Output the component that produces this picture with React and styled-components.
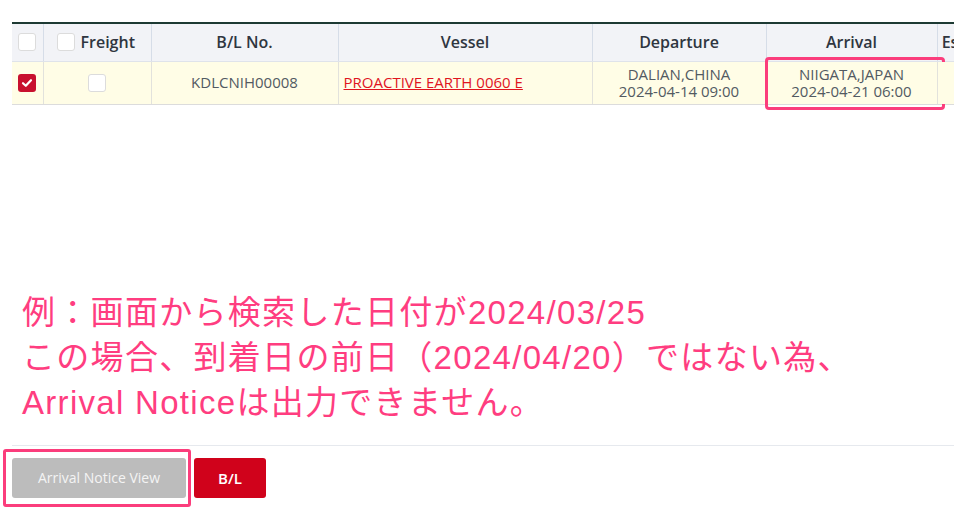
import React from "react";
import styled, { createGlobalStyle } from "styled-components";

const Global = createGlobalStyle`
  html, body { margin: 0; padding: 0; background: #fff; }
  body { font-family: "Open Sans", "Noto Sans", sans-serif; overflow: hidden; }
`;

const Page = styled.div`
  width: 954px;
  height: 515px;
  overflow: hidden;
  padding: 22px 0 0 12px;
  box-sizing: border-box;
  display: flex;
  flex-direction: column;
`;

const TableWrap = styled.div`
  width: 942px;
`;

const Table = styled.table`
  border-collapse: collapse;
  table-layout: fixed;
  width: 1000px;
  border-top: 2px solid #1d3a33;
`;

const Th = styled.th`
  background: #f2f3f7;
  height: 38px;
  padding: 0 0 1px 0;
  box-sizing: border-box;
  font-size: 16px;
  line-height: 20px;
  font-weight: 600;
  color: #2f3640;
  text-align: ${(p) => p.align || "center"};
  border-right: 1px solid #d6dde8;
  border-bottom: 1px solid #dfe3ea;
  white-space: nowrap;
  overflow: hidden;
`;

const Td = styled.td`
  background: #fffde6;
  height: 42px;
  padding: 0;
  font-size: 15px;
  line-height: 17px;
  color: #525a62;
  text-align: center;
  vertical-align: middle;
  border-right: 1px solid #e2e2dc;
  border-bottom: 1px solid #dcdcdc;
  position: relative;
`;

const CellInner = styled.div`
  display: flex;
  align-items: center;
  justify-content: ${(p) => p.justify || "center"};
  gap: 6px;
  padding-left: ${(p) => p.pl || 0}px;
`;

const Box = styled.span`
  display: inline-block;
  width: 18px;
  height: 18px;
  box-sizing: border-box;
  border: 1px solid #dcdcdc;
  border-radius: 3px;
  background: #fff;
  vertical-align: middle;
  margin-top: ${(p) => p.mt || 0}px;
`;

const CheckedBox = styled.span`
  display: inline-flex;
  align-items: center;
  justify-content: center;
  width: 18px;
  height: 18px;
  border-radius: 3px;
  background: #c8102e;
  vertical-align: middle;
`;

const VesselLink = styled.a`
  color: #e0141e;
  text-decoration: underline;
  font-size: 15px;
  display: block;
  text-align: left;
  padding-left: 5px;
`;

const Callout = styled.span`
  position: absolute;
  left: -2px;
  right: -8px;
  top: -5px;
  bottom: -6px;
  border: 3px solid #fb3d7c;
  border-radius: 4px;
  pointer-events: none;
`;

const Note = styled.div`
  margin-top: 185px;
  padding-left: 10px;
  font-family: "Liberation Sans", "Noto Sans CJK JP", sans-serif;
  font-size: 33px;
  line-height: 45px;
  letter-spacing: 1.3px;
  color: #ff3d80;
  white-space: nowrap;
`;

const Divider = styled.hr`
  border: 0;
  border-top: 1px solid #e6e9ee;
  margin: 20px 0 0 0;
  width: 942px;
`;

const ButtonRow = styled.div`
  display: flex;
  gap: 8px;
  padding-top: 12px;
`;

const ButtonHolder = styled.span`
  position: relative;
  display: inline-flex;
`;

const Button = styled.button`
  height: 40px;
  width: ${(p) => p.w}px;
  border: 0;
  border-radius: 3px;
  background: ${(p) => (p.variant === "disabled" ? "#bcbcbc" : "#d0021b")};
  color: ${(p) => (p.variant === "disabled" ? "#f4f4f4" : "#fff")};
  font-family: "Open Sans", sans-serif;
  font-size: ${(p) => (p.variant === "disabled" ? 14 : 15)}px;
  font-weight: ${(p) => (p.variant === "disabled" ? 400 : 600)};
  padding: 0;
`;

const ButtonCallout = styled.span`
  position: absolute;
  left: -9px;
  right: -5px;
  top: -9px;
  bottom: -9px;
  border: 3px solid #fb3d7c;
  border-radius: 3px;
  pointer-events: none;
`;

const Check = () => (
  <svg width="12" height="10" viewBox="0 0 12 10">
    <path d="M2 5.2 L4.8 7.8 L10 2.2" stroke="#fff" strokeWidth="2.2" fill="none" strokeLinecap="round" strokeLinejoin="round" />
  </svg>
);

export default function App() {
  return (
    <>
      <Global />
      <Page>
        <TableWrap>
          <Table>
            <colgroup>
              <col style={{ width: 31 }} />
              <col style={{ width: 108 }} />
              <col style={{ width: 187 }} />
              <col style={{ width: 254 }} />
              <col style={{ width: 174 }} />
              <col style={{ width: 171 }} />
              <col style={{ width: 75 }} />
            </colgroup>
            <thead>
              <tr>
                <Th><CellInner><Box mt={1} /></CellInner></Th>
                <Th><CellInner justify="flex-start" pl={13}><Box mt={1} />Freight</CellInner></Th>
                <Th>B/L No.</Th>
                <Th>Vessel</Th>
                <Th>Departure</Th>
                <Th>Arrival</Th>
                <Th align="left">&nbsp;Est.</Th>
              </tr>
            </thead>
            <tbody>
              <tr>
                <Td><CellInner><CheckedBox><Check /></CheckedBox></CellInner></Td>
                <Td><CellInner><Box /></CellInner></Td>
                <Td>KDLCNIH00008</Td>
                <Td><VesselLink href="#">PROACTIVE EARTH 0060 E</VesselLink></Td>
                <Td>DALIAN,CHINA<br />2024-04-14 09:00</Td>
                <Td>NIIGATA,JAPAN<br />2024-04-21 06:00<Callout /></Td>
                <Td />
              </tr>
            </tbody>
          </Table>
        </TableWrap>
        <Note>
          例：画面から検索した日付が2024/03/25<br />
          この場合、到着日の前日（2024/04/20）ではない為、<br />
          Arrival Noticeは出力できません。
        </Note>
        <Divider />
        <ButtonRow>
          <ButtonHolder>
            <Button variant="disabled" w={174}>Arrival Notice View</Button>
            <ButtonCallout />
          </ButtonHolder>
          <Button w={72}>B/L</Button>
        </ButtonRow>
      </Page>
    </>
  );
}
